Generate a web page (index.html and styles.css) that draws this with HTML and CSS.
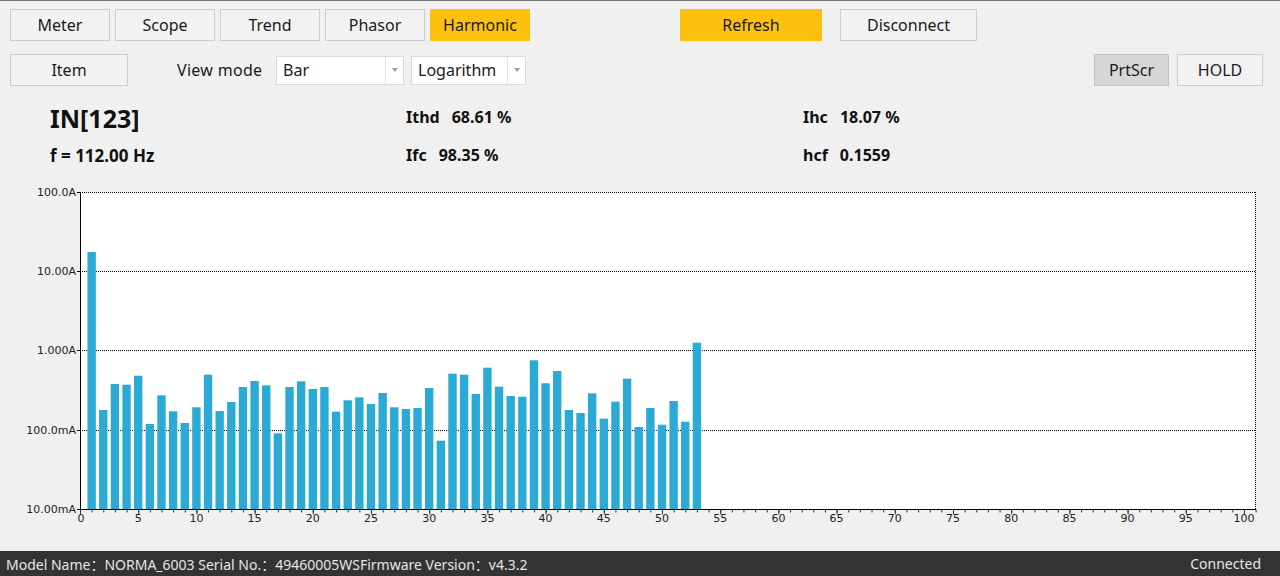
FILE: index.html
```html
<!DOCTYPE html>
<html>
<head>
    <title>Harmonic</title>
    <link rel="stylesheet" href="styles.css">
</head>
<body>
<div class="app">
    <div class="toolbar">
        <button class="btn tab">Meter</button>
        <button class="btn tab">Scope</button>
        <button class="btn tab">Trend</button>
        <button class="btn tab">Phasor</button>
        <button class="btn tab on">Harmonic</button>
        <button class="btn refresh on">Refresh</button>
        <button class="btn disconnect">Disconnect</button>
    </div>

    <div class="toolbar options">
        <button class="btn item">Item</button>
        <span class="label">View mode</span>
        <div class="combo combo-mode"><span class="combo-text">Bar</span><span class="combo-drop"><i class="arrow"></i></span></div>
        <div class="combo combo-scale"><span class="combo-text">Logarithm</span><span class="combo-drop"><i class="arrow"></i></span></div>
        <button class="btn prtscr">PrtScr</button>
        <button class="btn hold">HOLD</button>
    </div>

    <div class="stats">
        <div class="channel">IN[123]</div>
        <div class="stat top"><span>Ithd</span><span class="val">68.61 %</span></div>
        <div class="stat top"><span>Ihc</span><span class="val">18.07 %</span></div>
        <div class="freq">f = 112.00 Hz</div>
        <div class="stat"><span>Ifc</span><span class="val">98.35 %</span></div>
        <div class="stat"><span>hcf</span><span class="val">0.1559</span></div>
    </div>

    <div class="chart">
        <svg class="plot" width="1280" height="345" viewBox="0 182 1280 345">
            <rect x="80" y="192" width="1176" height="317" fill="#fff"/>
            <g class="grid">
                <line x1="80" y1="192.5" x2="1256" y2="192.5"/>
                <line x1="80" y1="271.5" x2="1256" y2="271.5"/>
                <line x1="80" y1="350.5" x2="1256" y2="350.5"/>
                <line x1="80" y1="430.5" x2="1256" y2="430.5"/>
                <line x1="1255.5" y1="192" x2="1255.5" y2="509"/>
            </g>
            <!-- harmonic order n sits at x = 80 + 11.64 * n -->
            <g class="bars" transform="translate(80 0) scale(11.64 1)">
                <rect x="0.64" y="252" width="0.72" height="257"/>
                <rect x="1.64" y="410" width="0.72" height="99"/>
                <rect x="2.64" y="384" width="0.72" height="125"/>
                <rect x="3.64" y="384.7" width="0.72" height="124.3"/>
                <rect x="4.64" y="375.7" width="0.72" height="133.3"/>
                <rect x="5.64" y="424" width="0.72" height="85"/>
                <rect x="6.64" y="395.3" width="0.72" height="113.7"/>
                <rect x="7.64" y="411.3" width="0.72" height="97.7"/>
                <rect x="8.64" y="423" width="0.72" height="86"/>
                <rect x="9.64" y="407.3" width="0.72" height="101.7"/>
                <rect x="10.64" y="374.7" width="0.72" height="134.3"/>
                <rect x="11.64" y="411" width="0.72" height="98"/>
                <rect x="12.64" y="402" width="0.72" height="107"/>
                <rect x="13.64" y="387" width="0.72" height="122"/>
                <rect x="14.64" y="381" width="0.72" height="128"/>
                <rect x="15.64" y="385.3" width="0.72" height="123.7"/>
                <rect x="16.64" y="433.3" width="0.72" height="75.7"/>
                <rect x="17.64" y="387" width="0.72" height="122"/>
                <rect x="18.64" y="381.3" width="0.72" height="127.7"/>
                <rect x="19.64" y="389" width="0.72" height="120"/>
                <rect x="20.64" y="387" width="0.72" height="122"/>
                <rect x="21.64" y="411.7" width="0.72" height="97.3"/>
                <rect x="22.64" y="400.3" width="0.72" height="108.7"/>
                <rect x="23.64" y="397.3" width="0.72" height="111.7"/>
                <rect x="24.64" y="404" width="0.72" height="105"/>
                <rect x="25.64" y="393" width="0.72" height="116"/>
                <rect x="26.64" y="407.3" width="0.72" height="101.7"/>
                <rect x="27.64" y="409" width="0.72" height="100"/>
                <rect x="28.64" y="408" width="0.72" height="101"/>
                <rect x="29.64" y="388" width="0.72" height="121"/>
                <rect x="30.64" y="440.7" width="0.72" height="68.3"/>
                <rect x="31.64" y="373.7" width="0.72" height="135.3"/>
                <rect x="32.64" y="374.7" width="0.72" height="134.3"/>
                <rect x="33.64" y="394" width="0.72" height="115"/>
                <rect x="34.64" y="367.7" width="0.72" height="141.3"/>
                <rect x="35.64" y="386.7" width="0.72" height="122.3"/>
                <rect x="36.64" y="396" width="0.72" height="113"/>
                <rect x="37.64" y="396.7" width="0.72" height="112.3"/>
                <rect x="38.64" y="360.3" width="0.72" height="148.7"/>
                <rect x="39.64" y="383.3" width="0.72" height="125.7"/>
                <rect x="40.64" y="371" width="0.72" height="138"/>
                <rect x="41.64" y="410" width="0.72" height="99"/>
                <rect x="42.64" y="413" width="0.72" height="96"/>
                <rect x="43.64" y="393.3" width="0.72" height="115.7"/>
                <rect x="44.64" y="418.7" width="0.72" height="90.3"/>
                <rect x="45.64" y="401.7" width="0.72" height="107.3"/>
                <rect x="46.64" y="378.7" width="0.72" height="130.3"/>
                <rect x="47.64" y="427" width="0.72" height="82"/>
                <rect x="48.64" y="408" width="0.72" height="101"/>
                <rect x="49.64" y="424.7" width="0.72" height="84.3"/>
                <rect x="50.64" y="401" width="0.72" height="108"/>
                <rect x="51.64" y="421.7" width="0.72" height="87.3"/>
                <rect x="52.64" y="342.7" width="0.72" height="166.3"/>
            </g>
            <path class="axis" d="M80.5 192V509.5H1256"/>
            <path class="axis" d="M77 192.5h3M77 271.5h3M77 350.5h3M77 430.5h3M77 509.5h3"/>
            <line class="ticks" x1="80" y1="511" x2="1257" y2="511" stroke-dasharray="1 10.64"/>
            <line class="ticks major" x1="80" y1="512" x2="1257" y2="512" stroke-dasharray="1 57.2"/>
            <g class="ylabels">
                <text x="76" y="196">100.0A</text>
                <text x="76" y="275">10.00A</text>
                <text x="76" y="354">1.000A</text>
                <text x="76" y="434">100.0mA</text>
                <text x="76" y="513">10.00mA</text>
            </g>
            <g class="xlabels">
                <text x="81" y="522">0</text>
                <text x="138.2" y="522">5</text>
                <text x="196.4" y="522">10</text>
                <text x="254.6" y="522">15</text>
                <text x="312.8" y="522">20</text>
                <text x="371" y="522">25</text>
                <text x="429.2" y="522">30</text>
                <text x="487.4" y="522">35</text>
                <text x="545.6" y="522">40</text>
                <text x="603.8" y="522">45</text>
                <text x="662" y="522">50</text>
                <text x="720.2" y="522">55</text>
                <text x="778.4" y="522">60</text>
                <text x="836.6" y="522">65</text>
                <text x="894.8" y="522">70</text>
                <text x="953" y="522">75</text>
                <text x="1011.2" y="522">80</text>
                <text x="1069.4" y="522">85</text>
                <text x="1127.6" y="522">90</text>
                <text x="1185.8" y="522">95</text>
                <text x="1244" y="522">100</text>
            </g>
        </svg>
    </div>

    <div class="status">
        <span>Model Name：NORMA_6003 Serial No.：49460005WSFirmware Version：v4.3.2</span>
        <span>Connected</span>
    </div>
</div>
</body>
</html>
```

FILE: styles.css
```css
html, body { margin: 0; padding: 0; }
body { background: #f0f0f0; font-family: "Noto Sans", "Noto Sans CJK SC", sans-serif; color: #1a1a1a; }

.app { height: 576px; box-sizing: border-box; border-top: 1px solid #707070; display: flex; flex-direction: column; }

.toolbar { display: flex; align-items: center; gap: 5px; padding: 8px 17px 0 10px; }
.toolbar.options { gap: 0; padding-top: 13px; }

.btn { box-sizing: border-box; width: 100px; height: 32px; padding: 0; border: 1px solid #cccccc; background: #f2f2f2; font-family: inherit; font-size: 16px; color: #1a1a1a; }
.btn.on { background: #fec00f; border-color: #fec00f; }
.refresh { width: 142px; margin-left: 145px; }
.disconnect { width: 137px; margin-left: 13px; }

.item { width: 118px; }
.label { width: 99px; margin-left: 49px; font-size: 16px; letter-spacing: 0.3px; }
.combo { box-sizing: border-box; display: flex; height: 29px; background: #fff; border: 1px solid #d9d9d9; }
.combo-mode { width: 128px; }
.combo-scale { width: 115px; margin-left: 7px; }
.combo-text { flex: 1; padding-left: 6px; font-size: 16px; line-height: 27px; }
.combo-drop { width: 17px; border-left: 1px solid #e3e3e3; display: flex; align-items: center; justify-content: center; }
.arrow { width: 0; height: 0; border-left: 3.5px solid transparent; border-right: 3.5px solid transparent; border-top: 4px solid #a0a0a0; }
.prtscr { width: 75px; margin-left: auto; background: #d6d6d6; border-color: #c2c2c2; }
.hold { width: 86px; margin-left: 8px; }

.stats { display: grid; grid-template-columns: 356px 397px auto; row-gap: 16px; margin-top: 20px; padding-left: 50px; font-weight: bold; color: #111; }
.stats div { line-height: 1; }
.channel { font-size: 25px; }
.freq { font-size: 17px; }
.stat { font-size: 16px; }
.stat.top { margin-top: 3px; }
.stat .val { margin-left: 12px; }

.chart { margin-top: 18px; }
.plot { display: block; }
.grid line { stroke: #000; stroke-width: 1; stroke-dasharray: 1 1; }
.bars { fill: #2aaad4; }
.axis { stroke: #000; stroke-width: 1; fill: none; }
.ticks { stroke: #333; stroke-width: 3; }
.ticks.major { stroke-width: 5; }
.ylabels text, .xlabels text { font-family: "DejaVu Sans", sans-serif; font-size: 11px; fill: #222; }
.ylabels text { text-anchor: end; }
.xlabels text { text-anchor: middle; }

.status { margin-top: auto; height: 25px; display: flex; align-items: center; justify-content: space-between; padding: 0 19px 0 6px; background: #333333; color: #e6e6e6; font-size: 14px; }
```
